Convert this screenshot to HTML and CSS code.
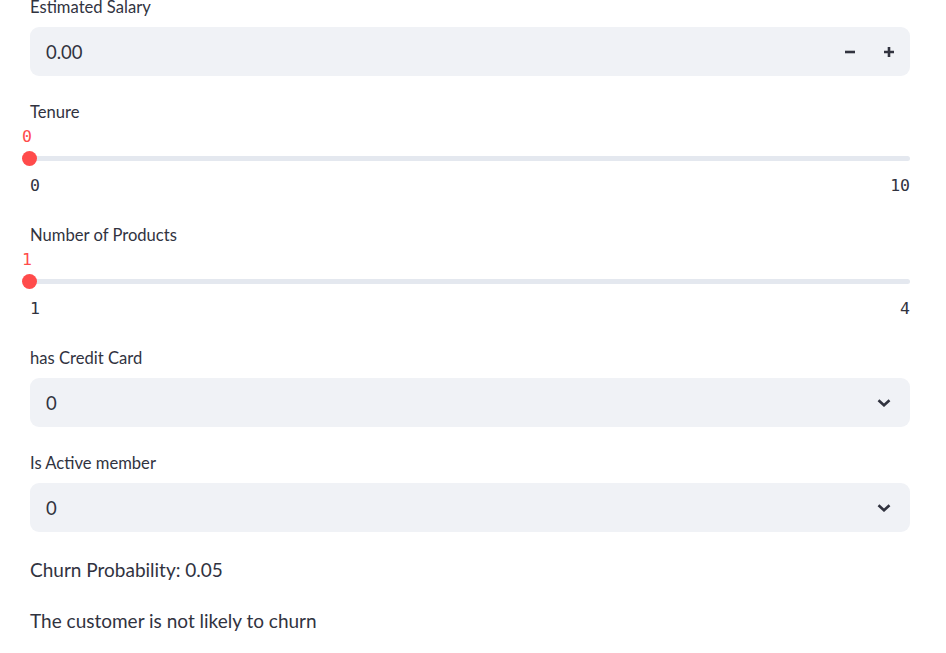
FILE: index.html
```html
<!DOCTYPE html>
<html>
<head>
<meta charset="utf-8">
<link rel="stylesheet" href="styles.css">
</head>
<body>
<main class="main">
  <section class="widget first">
    <div class="label">Estimated Salary</div>
    <div class="field">
      <span class="value">0.00</span>
      <div class="steppers">
        <svg class="step" width="12" height="12" viewBox="0 0 12 12"><path d="M1 6h10" stroke="#31333f" stroke-width="2.6"/></svg>
        <svg class="step" width="12" height="12" viewBox="0 0 12 12"><path d="M1 6h10M6 1v10" stroke="#31333f" stroke-width="2.6"/></svg>
      </div>
    </div>
  </section>

  <section class="widget">
    <div class="label">Tenure</div>
    <div class="slider">
      <div class="thumb-row"><span class="thumb-value">0</span></div>
      <div class="track-row">
        <div class="track"></div>
        <div class="thumb"></div>
      </div>
      <div class="ticks"><span>0</span><span>10</span></div>
    </div>
  </section>

  <section class="widget">
    <div class="label">Number of Products</div>
    <div class="slider">
      <div class="thumb-row"><span class="thumb-value">1</span></div>
      <div class="track-row">
        <div class="track"></div>
        <div class="thumb"></div>
      </div>
      <div class="ticks"><span>1</span><span>4</span></div>
    </div>
  </section>

  <section class="widget">
    <div class="label">has Credit Card</div>
    <div class="field">
      <span class="value">0</span>
      <svg class="chevron" width="14" height="8" viewBox="0 0 14 8"><path d="M1.5 1.3L7 6.3l5.5-5" fill="none" stroke="#31333f" stroke-width="2.6"/></svg>
    </div>
  </section>

  <section class="widget">
    <div class="label">Is Active member</div>
    <div class="field">
      <span class="value">0</span>
      <svg class="chevron" width="14" height="8" viewBox="0 0 14 8"><path d="M1.5 1.3L7 6.3l5.5-5" fill="none" stroke="#31333f" stroke-width="2.6"/></svg>
    </div>
  </section>

  <p class="text">Churn Probability: 0.05</p>
  <p class="text">The customer is not likely to churn</p>
</main>
</body>
</html>
```
FILE: styles.css
```css
* { box-sizing: border-box; }
html, body { margin: 0; padding: 0; background: #ffffff; }
body {
  font-family: "Lato", "Noto Sans", sans-serif;
  color: #31333f;
  overflow: hidden;
}
.main {
  width: 880px;
  margin-left: 30px;
  margin-top: -3px;
  display: flex;
  flex-direction: column;
}
.widget { display: flex; flex-direction: column; margin-top: 26px; }
.widget.first { margin-top: 0; }
.label {
  font-size: 16.6px;
  line-height: 20px;
  height: 20px;
  margin-bottom: 10px;
}
.slider { position: relative; }
.widget:has(.slider) .label { margin-bottom: 5px; }
.field {
  height: 49px;
  background: #f0f2f6;
  border-radius: 9px;
  display: flex;
  align-items: center;
  padding: 0 16px;
}
.value { font-size: 18.5px; flex: 1; }
.steppers { display: flex; gap: 27px; align-items: center; margin-right: -1px; }
.step { display: block; }
.chevron { display: block; margin-right: 3px; }
.thumb-row {
  position: relative;
  height: 20px;
  font-family: "DejaVu Sans Mono", "Liberation Mono", monospace;
  font-size: 16.5px;
  line-height: 20px;
}
.thumb-value { position: absolute; left: -8px; top: 0; color: #ff4b4b; }
.track-row {
  position: relative;
  height: 16px;
  margin-top: 3px;
  display: flex;
  align-items: center;
}
.track { width: 100%; height: 5px; background: #e4e8ef; border-radius: 3px; }
.thumb {
  position: absolute;
  left: -8px;
  top: 0.5px;
  width: 15px;
  height: 15px;
  border-radius: 50%;
  background: #ff4b4b;
}
.ticks {
  display: flex;
  justify-content: space-between;
  margin-top: 10px;
  height: 20px;
  line-height: 20px;
  font-family: "DejaVu Sans Mono", "Liberation Mono", monospace;
  font-size: 16.5px;
}
.widget:has(.slider) + .widget { margin-top: 29px; }
.text {
  margin: 26px 0 0 0;
  font-size: 19px;
  line-height: 24px;
}
.text + .text { margin-top: 27px; }
```
